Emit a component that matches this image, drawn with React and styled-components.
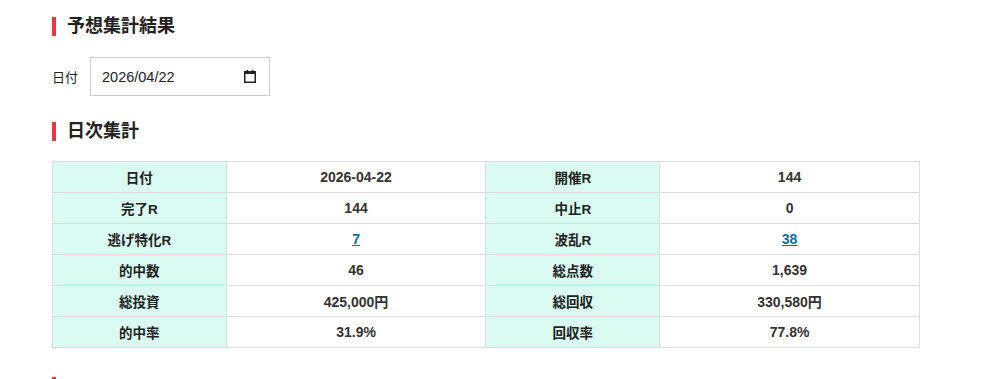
import React from "react";
import styled, { createGlobalStyle } from "styled-components";

const Global = createGlobalStyle`
  html, body { margin: 0; padding: 0; background: #fff; overflow: hidden; }
  body { font-family: "Liberation Sans", "Noto Sans CJK JP", sans-serif; color: #333; }
`;

const Page = styled.div`
  padding: 17px 0 0 52px;
  display: flex;
  flex-direction: column;
`;

const Heading = styled.h2`
  margin: 0 0 ${(p) => p.$mb || 0}px;
  border-left: 4px solid #e8383d;
  padding-left: 11px;
  font-size: 18px;
  line-height: 19px;
  height: 19px;
  font-weight: 700;
  color: #222;
`;

const DateRow = styled.div`
  display: flex;
  align-items: center;
  gap: 12px;
  margin-bottom: 26px;
`;

const Label = styled.label`
  font-size: 13px;
  color: #222;
`;

const DateField = styled.div`
  box-sizing: border-box;
  width: 180px;
  height: 39px;
  border: 1px solid #ccc;
  background: #fff;
  display: flex;
  align-items: center;
  padding: 0 13px 0 11px;
  gap: 4px;
`;

const DateInput = styled.input`
  flex: 1;
  min-width: 0;
  border: 0;
  outline: none;
  padding: 0;
  font-family: "Liberation Sans", "Noto Sans CJK JP", sans-serif;
  font-size: 14.5px;
  color: #222;
  background: transparent;
`;

const CalIcon = () => (
  <svg width="12" height="13" viewBox="0 0 12 13" aria-hidden="true">
    <rect x="0.75" y="1.75" width="10.5" height="10.5" fill="none" stroke="#222" strokeWidth="1.5" />
    <rect x="0" y="1" width="12" height="3" fill="#222" />
    <rect x="2.5" y="0" width="1.5" height="2" fill="#222" />
    <rect x="8" y="0" width="1.5" height="2" fill="#222" />
  </svg>
);

const Table = styled.table`
  width: 868px;
  border-collapse: collapse;
  table-layout: fixed;
  margin-top: -1px;
  margin-bottom: 29px;
  font-size: 14px;
  font-weight: 700;
`;

const Th = styled.th`
  width: 20%;
  height: 30px;
  padding: 0;
  border: 1px solid #ddd;
  background: #d9fbf1;
  color: #222;
  text-align: center;
  font-weight: 700;
  font-size: 13.5px;
`;

const Td = styled.td`
  width: 30%;
  height: 30px;
  padding: 0;
  border: 1px solid #ddd;
  text-align: center;
  color: #333;
`;

const Link = styled.a`
  color: #0b6ea8;
  text-decoration: underline;
`;

const SectionMark = styled.div`
  width: 4px;
  height: 19px;
  background: #e8383d;
`;

const rows = [
  ["日付", "2026-04-22", "開催R", "144"],
  ["完了R", "144", "中止R", "0"],
  ["逃げ特化R", { link: "7" }, "波乱R", { link: "38" }],
  ["的中数", "46", "総点数", "1,639"],
  ["総投資", "425,000円", "総回収", "330,580円"],
  ["的中率", "31.9%", "回収率", "77.8%"],
];

const Val = ({ v }) =>
  typeof v === "object" ? <Link href="#">{v.link}</Link> : v;

export default function App() {
  return (
    <>
      <Global />
      <Page>
        <Heading $mb={21}>予想集計結果</Heading>
        <DateRow>
          <Label>日付</Label>
          <DateField>
            <DateInput type="text" defaultValue="2026/04/22" />
            <CalIcon />
          </DateField>
        </DateRow>
        <Heading $mb={21}>日次集計</Heading>
        <Table>
          <tbody>
            {rows.map((r, i) => (
              <tr key={i}>
                <Th>{r[0]}</Th>
                <Td><Val v={r[1]} /></Td>
                <Th>{r[2]}</Th>
                <Td><Val v={r[3]} /></Td>
              </tr>
            ))}
          </tbody>
        </Table>
        <SectionMark />
      </Page>
    </>
  );
}
